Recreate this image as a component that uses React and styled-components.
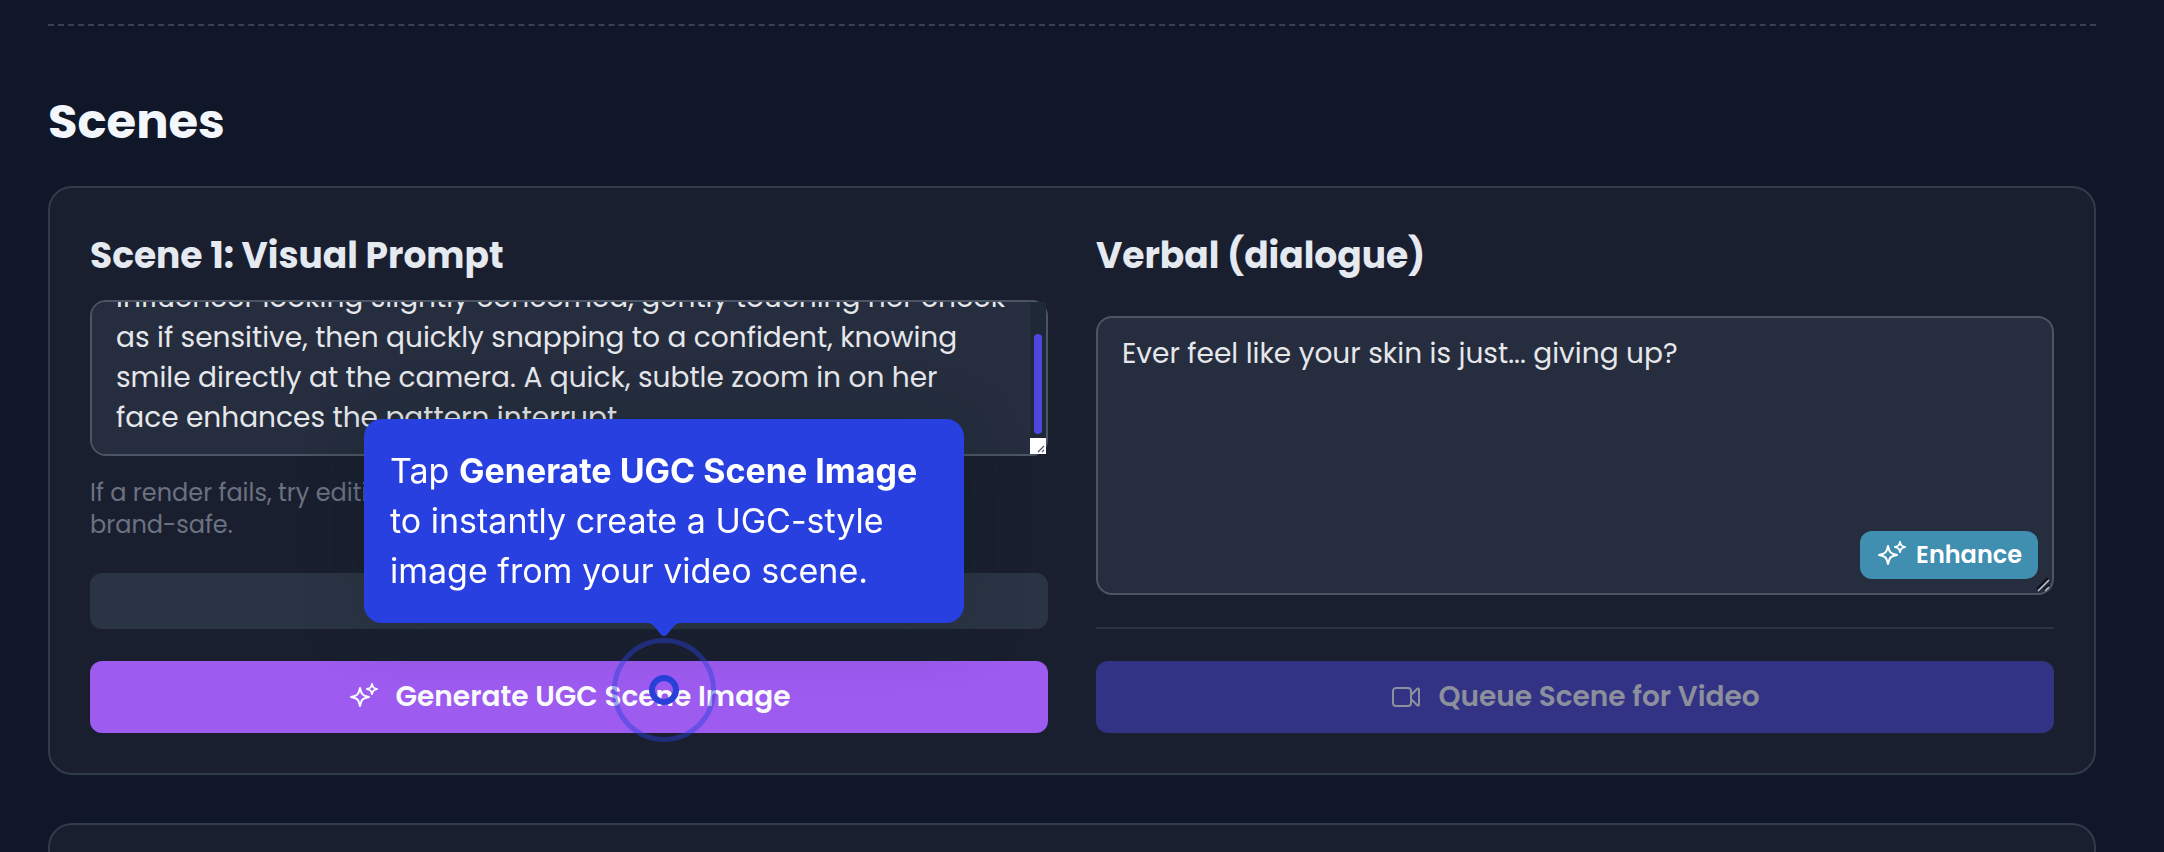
import { useEffect, useRef } from 'react'
import styled, { createGlobalStyle } from 'styled-components'

const GlobalStyle = createGlobalStyle`
    * {
        box-sizing: border-box;
    }
    body {
        margin: 0;
        background: #101728;
        color: #e5e7eb;
        font-family: Poppins, Inter, sans-serif;
    }
`

const Page = styled.main`
    height: 100vh;
    overflow: hidden;
    padding: 24px 68px 0 48px;
`

const Divider = styled.hr`
    width: 100%;
    margin: 0;
    border: 0;
    border-top: 2px ${props => props.$dashed ? 'dashed #374151' : 'solid #2a3444'};
`

const Title = styled.h2`
    margin: 64px 0 32px;
    font-size: 48px;
    line-height: 64px;
    font-weight: 700;
    color: #f3f6fb;
`

const Card = styled.section`
    display: grid;
    grid-template-columns: 1fr 1fr;
    gap: 48px;
    min-height: 120px;
    margin-bottom: 48px;
    padding: 40px;
    border: 2px solid #303c4c;
    border-radius: 24px;
    background: #1a1f30;
`

const Column = styled.div`
    display: flex;
    flex-direction: column;
    min-width: 0;
`

const Label = styled.label`
    margin-bottom: ${props => props.$gap}px;
    font-size: 36px;
    line-height: 56px;
    font-weight: 700;
    color: #e5e9f0;
`

const Field = styled.div`
    position: relative;
    flex: ${props => props.$grow ? 1 : 'none'};
    margin-bottom: ${props => props.$grow ? '32px' : 0};
`

const TextArea = styled.textarea`
    display: block;
    width: 100%;
    height: ${props => props.$tall ? '100%' : '156px'};
    margin: 0;
    padding: 16px ${props => props.$tall ? '24px' : '40px'} 16px 24px;
    border: 2px solid #4b5563;
    border-radius: 16px;
    outline: none;
    resize: none;
    scrollbar-width: none;
    background: #252d3e;
    color: #e5e7eb;
    font: inherit;
    font-size: 28px;
    line-height: 40px;
`

const ScrollTrack = styled.div`
    position: absolute;
    top: 2px;
    right: 2px;
    bottom: 2px;
    display: flex;
    flex-direction: column;
    justify-content: flex-end;
    width: 16px;
    background: #1f2837;
    pointer-events: none;
`

const ScrollThumb = styled.span`
    height: 100px;
    margin: 4px;
    border-radius: 4px;
    background: #4f46e0;
`

const ScrollCorner = styled.span`
    height: 16px;
    background: #fff;
    color: #4b5563;

    & svg {
        display: block;
    }
`

const GripCorner = styled.span`
    position: absolute;
    right: 2px;
    bottom: 2px;
    width: 16px;
    height: 16px;
    color: #b9bec7;
    pointer-events: none;

    & svg {
        display: block;
    }
`

const Hint = styled.p`
    margin: 21px 0 32px;
    font-size: 24px;
    line-height: 32px;
    color: #6b7280;
`

const NoBreak = styled.span`
    white-space: nowrap;
`

const StatusBar = styled.div`
    height: 56px;
    margin-bottom: 32px;
    border-radius: 12px;
    background: #2b3445;
`

const Target = styled.div`
    position: relative;
`

const Button = styled.button`
    display: flex;
    align-items: center;
    justify-content: center;
    gap: 16px;
    width: 100%;
    height: 72px;
    border: 0;
    border-radius: 12px;
    background: ${props => props.disabled ? '#333386' : '#9d5bf0'};
    color: ${props => props.disabled ? '#8c8f9c' : '#f9fafb'};
    font: inherit;
    font-size: 28px;
    line-height: 40px;
    font-weight: 600;
`

const QueueButton = styled(Button)`
    margin-top: 32px;
`

const EnhanceButton = styled.button`
    position: absolute;
    right: 16px;
    bottom: 16px;
    display: flex;
    align-items: center;
    gap: 8px;
    height: 48px;
    padding: 0 16px;
    border: 0;
    border-radius: 12px;
    background: #418fb0;
    color: #fff;
    font: inherit;
    font-size: 24px;
    line-height: 32px;
    font-weight: 600;
`

const Hotspot = styled.div`
    position: absolute;
    left: calc(50% + 95px);
    top: 29px;
    width: 0;
    height: 0;
`

const Ring = styled.span`
    position: absolute;
    width: ${props => props.$size}px;
    height: ${props => props.$size}px;
    border: ${props => props.$faint ? 5 : 6}px solid #2940d8;
    border-radius: 50%;
    opacity: ${props => props.$faint ? 0.45 : 1};
    transform: translate(-50%, -50%);
    pointer-events: none;
`

const Tooltip = styled.div`
    position: absolute;
    bottom: 67px;
    width: 600px;
    padding: 27px 26px;
    border-radius: 18px;
    background: #2940e0;
    box-shadow: 0 8px 60px rgba(15, 35, 30, 0.25);
    transform: translateX(-50%);
    color: #fff;
    font-family: Inter, sans-serif;
    font-size: 34px;
    line-height: 50px;
`

const Arrow = styled.svg`
    position: absolute;
    top: 100%;
    left: 50%;
    display: block;
    margin-left: -17px;
    fill: #2940e0;
`

const Sparkles = () => (
    <svg width="32" height="32" viewBox="0 0 24 24" fill="none" stroke="currentColor" strokeWidth="1.5" strokeLinejoin="round" strokeLinecap="round" aria-hidden="true">
        <path d="M9.813 15.904 9 18.75l-.813-2.846a4.5 4.5 0 0 0-3.09-3.09L2.25 12l2.846-.813a4.5 4.5 0 0 0 3.09-3.09L9 5.25l.813 2.846a4.5 4.5 0 0 0 3.09 3.09L15.75 12l-2.846.813a4.5 4.5 0 0 0-3.09 3.09Z" />
        <path d="M18.259 8.715 18 9.75l-.259-1.035a3.375 3.375 0 0 0-2.455-2.456L14.25 6l1.036-.259a3.375 3.375 0 0 0 2.455-2.456L18 2.25l.259 1.035a3.375 3.375 0 0 0 2.456 2.456L21.75 6l-1.035.259a3.375 3.375 0 0 0-2.456 2.456Z" />
    </svg>
)

const VideoCamera = () => (
    <svg width="32" height="32" viewBox="0 0 24 24" fill="none" stroke="currentColor" strokeWidth="1.5" strokeLinejoin="round" strokeLinecap="round" aria-hidden="true">
        <path d="m15.75 10.5 4.72-4.72a.75.75 0 0 1 1.28.53v11.38a.75.75 0 0 1-1.28.53l-4.72-4.72M4.5 18.75h9a2.25 2.25 0 0 0 2.25-2.25v-9a2.25 2.25 0 0 0-2.25-2.25h-9A2.25 2.25 0 0 0 2.25 7.5v9a2.25 2.25 0 0 0 2.25 2.25Z" />
    </svg>
)

const SmallGrip = () => (
    <svg width="16" height="16" viewBox="0 0 16 16" fill="none" stroke="currentColor" strokeWidth="1.2" aria-hidden="true">
        <path d="M8 14l6-6M12 14l2-2" />
    </svg>
)

const Grip = () => (
    <svg width="16" height="16" viewBox="0 0 16 16" fill="none" aria-hidden="true">
        <path d="M1 12L12 1M8 13l5-5" stroke="#0d1220" strokeWidth="2" />
        <path d="M2 14L13 3M9 14l4-4" stroke="currentColor" strokeWidth="1.6" />
    </svg>
)

const visualPrompt = 'Influencer looking slightly concerned, gently touching her cheek as if sensitive, then quickly snapping to a confident, knowing smile directly at the camera. A quick, subtle zoom in on her face enhances the pattern interrupt.'

const App = () => {
    const promptRef = useRef(null)

    // keep the end of the prompt in view
    useEffect(() => {
        promptRef.current.scrollTop = promptRef.current.scrollHeight
    }, [])

    return (
        <Page>
            <GlobalStyle />
            <Divider $dashed />
            <Title>Scenes</Title>
            <Card>
                <Column>
                    <Label htmlFor="visual" $gap={16}>Scene 1: Visual Prompt</Label>
                    <Field>
                        <TextArea id="visual" ref={promptRef} defaultValue={visualPrompt} spellCheck={false} />
                        <ScrollTrack>
                            <ScrollThumb />
                            <ScrollCorner><SmallGrip /></ScrollCorner>
                        </ScrollTrack>
                    </Field>
                    <Hint>
                        If a render fails, try editing the prompt to keep it short, simple, clear and <NoBreak>brand-safe.</NoBreak>
                    </Hint>
                    <StatusBar />
                    <Target>
                        <Button type="button">
                            <Sparkles />
                            Generate UGC Scene Image
                        </Button>
                        <Hotspot>
                            <Tooltip role="tooltip">
                                Tap <b>Generate UGC Scene Image</b> to instantly create a UGC-style image from your video scene.
                                <Arrow width="34" height="14" viewBox="0 0 34 14" aria-hidden="true">
                                    <path d="M0 0h34c-3 0-5 1-7 3l-7 8.500c-2 2-4 2-6 0L7 3C5 1 3 0 0 0z" />
                                </Arrow>
                            </Tooltip>
                            <Ring $size={104} $faint />
                            <Ring $size={30} />
                        </Hotspot>
                    </Target>
                </Column>
                <Column>
                    <Label htmlFor="verbal" $gap={32}>Verbal (dialogue)</Label>
                    <Field $grow>
                        <TextArea id="verbal" $tall defaultValue="Ever feel like your skin is just... giving up?" spellCheck={false} />
                        <GripCorner><Grip /></GripCorner>
                        <EnhanceButton type="button">
                            <Sparkles />
                            Enhance
                        </EnhanceButton>
                    </Field>
                    <Divider />
                    <QueueButton type="button" disabled>
                        <VideoCamera />
                        Queue Scene for Video
                    </QueueButton>
                </Column>
            </Card>
            <Card />
        </Page>
    )
}

export default App
